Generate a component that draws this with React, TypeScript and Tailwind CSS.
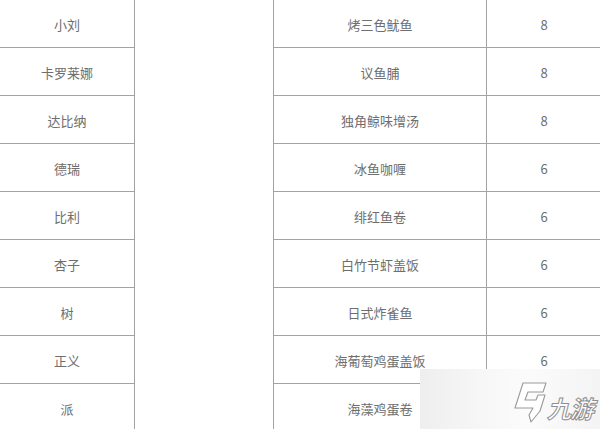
import React from "react";

const left = ["小刘", "卡罗莱娜", "达比纳", "德瑞", "比利", "杏子", "树", "正义", "派"];
const right: [string, string][] = [
  ["烤三色鱿鱼", "8"],
  ["议鱼脯", "8"],
  ["独角鲸味增汤", "8"],
  ["冰鱼咖喱", "6"],
  ["绯红鱼卷", "6"],
  ["白竹节虾盖饭", "6"],
  ["日式炸雀鱼", "6"],
  ["海葡萄鸡蛋盖饭", "6"],
  ["海藻鸡蛋卷", ""],
];

export default function App() {
  return (
    <div className="relative w-[600px] h-[429px] overflow-hidden bg-white font-['Noto_Sans_CJK_SC','Noto_Sans',sans-serif] text-[13px] text-[#6e6e6e]">
      <table className="border-collapse table-fixed w-[602px] -ml-px -mt-px">
        <colgroup>
          <col className="w-[135px]" />
          <col className="w-[139px]" />
          <col className="w-[213px]" />
          <col className="w-[115px]" />
        </colgroup>
        <tbody>
          {left.map((name, i) => (
            <tr key={i} className="h-[48px]">
              <td className="border border-[#a3a3a3] text-center align-middle p-0 pt-[2px]">{name}</td>
              {i === 0 && (
                <td rowSpan={left.length} className="border border-[#a3a3a3] p-0"></td>
              )}
              <td className="border border-[#a3a3a3] text-center align-middle p-0 pt-[2px]">{right[i][0]}</td>
              <td className="border border-[#a3a3a3] text-center align-middle p-0 pt-[2px]">{right[i][1]}</td>
            </tr>
          ))}
        </tbody>
      </table>

      <div className="absolute left-[420px] top-[369px] w-[180px] h-[60px] bg-[linear-gradient(90deg,#eeeeee_0%,#f7f7f7_35%,#fbfbfb_60%,#f4f4f4_100%)]">
        <svg className="absolute left-[92px] top-[13px]" width="36" height="42" viewBox="0 0 36 42">
          <path
            d="M11 1 H34 L31 10 H16 L13 18 H24 L26 13 H33 L28 29 L19 40 L17 33 L21 26 H3 Z"
            fill="#ffffff"
            stroke="#9a9a9a"
            strokeWidth="1.1"
            strokeLinejoin="round"
          />
        </svg>
        <span className="absolute left-[127px] top-[27px] text-[24px] leading-none font-bold italic text-white tracking-[-1px] [-webkit-text-stroke:1px_#8f8f8f]">
          九游
        </span>
      </div>
    </div>
  );
}
